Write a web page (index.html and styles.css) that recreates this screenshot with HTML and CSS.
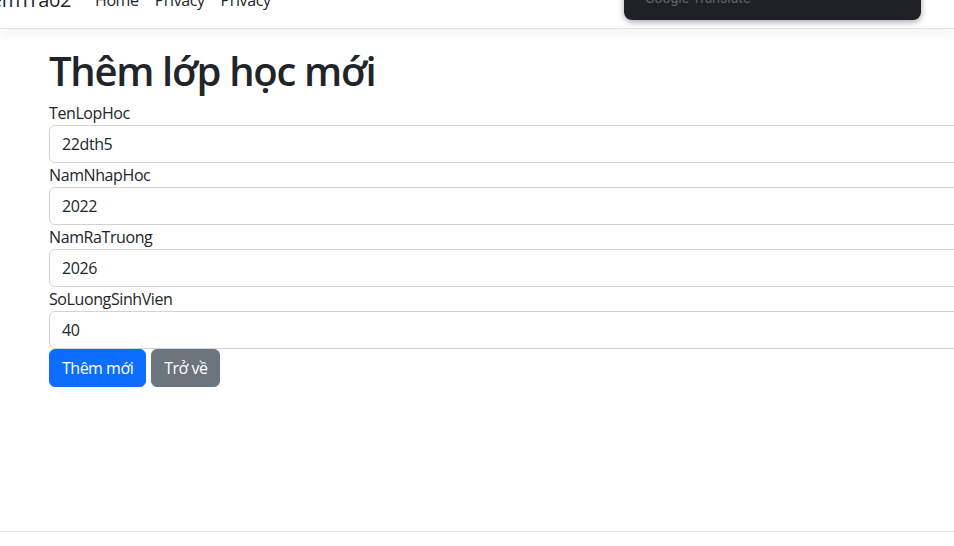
FILE: index.html
```html
<!DOCTYPE html>
<html lang="vi">
<head>
<meta charset="utf-8">
<title>Thêm lớp học mới</title>
<link rel="stylesheet" href="styles.css">
</head>
<body>
<div class="page">
  <header class="navbar">
    <div class="brand-wrap"><a class="brand" href="#">KiemTra02</a></div>
    <nav class="nav">
      <a class="nav-link" href="#">Home</a>
      <a class="nav-link" href="#">Privacy</a>
      <a class="nav-link" href="#">Privacy</a>
    </nav>
  </header>
  <main class="main">
    <h1 class="title">Thêm lớp học mới</h1>
    <form class="form">
      <label class="label">TenLopHoc</label>
      <input class="input" type="text" value="22dth5">
      <label class="label">NamNhapHoc</label>
      <input class="input" type="text" value="2022">
      <label class="label">NamRaTruong</label>
      <input class="input" type="text" value="2026">
      <label class="label">SoLuongSinhVien</label>
      <input class="input" type="text" value="40">
      <div class="actions">
        <button class="btn btn-primary" type="button">Thêm mới</button>
        <button class="btn btn-secondary" type="button">Trở về</button>
      </div>
    </form>
  </main>
  <footer class="footer"></footer>
</div>
<div class="gt-popup"><span class="gt-text">Google Translate</span></div>
</body>
</html>
```
FILE: styles.css
```css
html, body {
  margin: 0;
  padding: 0;
  overflow: hidden;
  background: #fff;
}
body {
  font-family: "Open Sans", "Noto Sans", sans-serif;
  font-size: 16px;
  line-height: 1.5;
  letter-spacing: -0.4px;
  color: #212529;
}
.page {
  margin-top: -28px;
  min-height: calc(100vh + 28px);
  display: flex;
  flex-direction: column;
}
.navbar {
  display: flex;
  align-items: center;
  height: 56px;
  border-bottom: 1px solid #e5e5e5;
  box-shadow: 0 4px 12px rgba(0, 0, 0, 0.05);
  background: #fff;
  flex-shrink: 0;
}
.brand-wrap {
  width: 71px;
  display: flex;
  justify-content: flex-end;
  margin-right: 16px;
  flex-shrink: 0;
}
.brand {
  font-size: 20px;
  color: #212529;
  text-decoration: none;
  white-space: nowrap;
}
.nav {
  display: flex;
}
.nav-link {
  padding: 8px;
  color: #212529;
  text-decoration: none;
}
.main {
  flex: 1;
  padding: 16px 0 0 49px;
}
.title {
  margin: 0 0 6px;
  padding-top: 2px;
  font-size: 40px;
  font-weight: 600;
  letter-spacing: -1.3px;
  line-height: 1.2;
}
.form {
  width: 1100px;
  display: flex;
  flex-direction: column;
}
.label {
  display: block;
}
.input {
  box-sizing: border-box;
  height: 38px;
  padding: 6px 12px;
  font: inherit;
  letter-spacing: -0.4px;
  color: #212529;
  border: 1px solid #ced4da;
  border-radius: 6px;
  background: #fff;
}
.actions {
  display: flex;
  gap: 5px;
}
.btn {
  font: inherit;
  letter-spacing: -0.5px;
  padding: 6px 12px;
  border: 1px solid transparent;
  border-radius: 6px;
  color: #fff;
  line-height: 1.5;
}
.btn-primary {
  background: #0d6efd;
  border-color: #0d6efd;
}
.btn-secondary {
  background: #6c757d;
  border-color: #6c757d;
}
.footer {
  height: 14px;
  border-top: 1px solid #dee2e6;
  flex-shrink: 0;
}
.gt-popup {
  position: absolute;
  left: 624px;
  top: -40px;
  width: 297px;
  height: 60px;
  background: #202124;
  border-radius: 8px;
  box-shadow: 0 2px 6px rgba(0, 0, 0, 0.35);
}
.gt-text {
  position: absolute;
  left: 21px;
  top: 30px;
  font-family: Roboto, sans-serif;
  font-size: 14px;
  letter-spacing: 0;
  color: #5f6368;
  line-height: 16px;
}
```
